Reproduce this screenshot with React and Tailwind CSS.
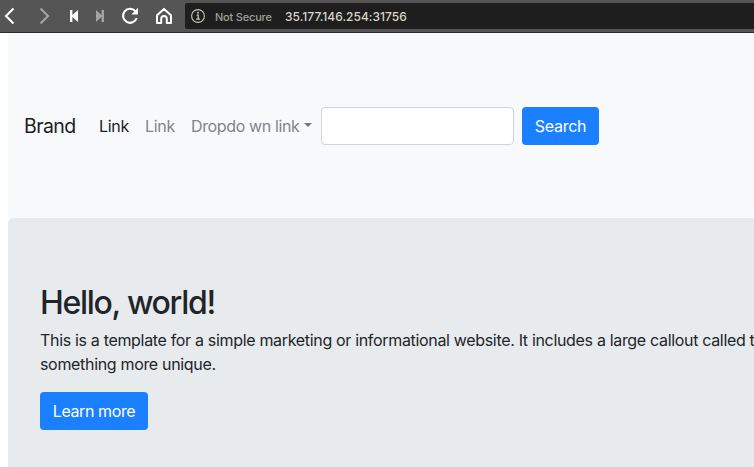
function BackIcon({ className }) {
  return (
    <svg className={className} width="12" height="18" viewBox="0 0 12 18" fill="none" stroke="currentColor" strokeWidth="2.1">
      <path d="M9.5 1.5 2 9l7.5 7.5" />
    </svg>
  );
}

function ForwardIcon({ className }) {
  return (
    <svg className={className} width="12" height="18" viewBox="0 0 12 18" fill="none" stroke="currentColor" strokeWidth="2.1">
      <path d="m2.5 1.5 7.5 7.5-7.5 7.5" />
    </svg>
  );
}

function RewindIcon({ className }) {
  return (
    <svg className={className} width="9" height="12" viewBox="0 0 9 12" fill="currentColor">
      <path d="M0 0h2.4v5L8 0v12L2.4 7v5H0z" />
    </svg>
  );
}

function FastForwardIcon({ className }) {
  return (
    <svg className={className} width="9" height="12" viewBox="0 0 9 12" fill="currentColor">
      <path d="M8 0H5.6v5L0 0v12l5.6-5v5H8z" />
    </svg>
  );
}

function ReloadIcon({ className }) {
  return (
    <svg className={className} width="18" height="18" viewBox="0 0 18 18" fill="none" stroke="currentColor" strokeWidth="2.1">
      <path d="M14.4 4.3A7 7 0 1 0 15.7 11" />
      <path d="M17 .8v6.6h-6.6z" fill="currentColor" stroke="none" />
    </svg>
  );
}

function HomeIcon({ className }) {
  return (
    <svg className={className} width="18" height="18" viewBox="0 0 18 18" fill="none" stroke="currentColor" strokeWidth="2" strokeLinejoin="round">
      <path d="M2 8.3 9 1.9l7 6.4v7.6h-4.2v-4.2a2.8 2.8 0 0 0-5.6 0v4.2H2z" />
    </svg>
  );
}

function InfoIcon() {
  return (
    <svg className="ml-[6px] shrink-0 text-[#c8c5bd]" width="14" height="14" viewBox="0 0 14 14" fill="none" stroke="currentColor">
      <circle cx="7" cy="7" r="6.4" strokeWidth="1.1" />
      <path d="M5.6 6.2h1.6v4M5.2 10.2h3.8" strokeWidth="1.3" />
      <circle cx="7" cy="3.8" r="1" fill="currentColor" stroke="none" />
    </svg>
  );
}

export default function App() {
  return (
    <div className="flex h-[467px] w-full flex-col overflow-hidden bg-white font-['Inter','Liberation_Sans',sans-serif] text-base text-[#212529]">
      <header className="flex h-[33px] shrink-0 items-center border-b border-[#2b2a2c] bg-[#555555] text-white">
        <BackIcon className="ml-[4px] shrink-0" />
        <ForwardIcon className="ml-[22px] shrink-0 text-[#a3a3a3]" />
        <RewindIcon className="ml-[20px] shrink-0" />
        <FastForwardIcon className="ml-[17px] shrink-0 text-[#a3a3a3]" />
        <ReloadIcon className="ml-[16px] shrink-0" />
        <HomeIcon className="ml-[16px] shrink-0" />
        <div className="ml-[12px] flex h-[26px] flex-1 items-center rounded-l-[2px] bg-[#1e1e1e]">
          <InfoIcon />
          <span className="ml-[10px] w-[70px] whitespace-nowrap pt-[2px] text-[11px] font-medium tracking-[-0.2px] text-[#a19e98]">Not Secure</span>
          <span className="whitespace-nowrap pt-px text-[12px] font-medium tracking-[0.02px] text-[#d8d5cd]">35.177.146.254:31756</span>
        </div>
      </header>

      <main className="ml-2 flex flex-1 flex-col">
        <nav className="flex h-[185px] shrink-0 items-center bg-[#f8f9fb] pl-4">
          <a className="w-[67px] whitespace-nowrap pt-[2px] text-[19.5px] tracking-[-0.6px] text-[#1b1c1d]">Brand</a>
          <a className="ml-2 w-[46px] tracking-[-0.3px] text-[#1b1c1d]">Link</a>
          <a className="w-[46px] tracking-[-0.3px] text-[#838485]">Link</a>
          <a className="flex w-[130px] items-center whitespace-nowrap tracking-[-0.37px] text-[#838485]">
            Dropdo wn link
            <span className="mb-[2px] ml-[5px] border-x-[4.5px] border-t-[4.5px] border-x-transparent border-t-[#777879]" />
          </a>
          <input className="h-[38px] w-[193px] rounded-[4px] border border-[#ced4da] bg-white px-3 outline-none" aria-label="Search" />
          <button className="ml-2 h-[38px] w-[77px] rounded-[4px] bg-[#1b80ff] tracking-[-0.3px] text-white">Search</button>
        </nav>

        <section className="flex-1 rounded-tl-[5px] bg-[#e8ebee] pl-8 pt-[66px]">
          <h2 className="text-[32px] font-medium leading-[38px] tracking-[-1.3px]">Hello, world!</h2>
          <p className="mt-1.5 whitespace-nowrap leading-6 tracking-[-0.325px]">
            This is a template for a simple marketing or informational website. It includes a large callout called t
            <br />
            something more unique.
          </p>
          <button className="mt-4 h-[38px] w-[108px] rounded-[4px] bg-[#1b80ff] tracking-[-0.4px] text-white">Learn more</button>
        </section>
      </main>
    </div>
  );
}
